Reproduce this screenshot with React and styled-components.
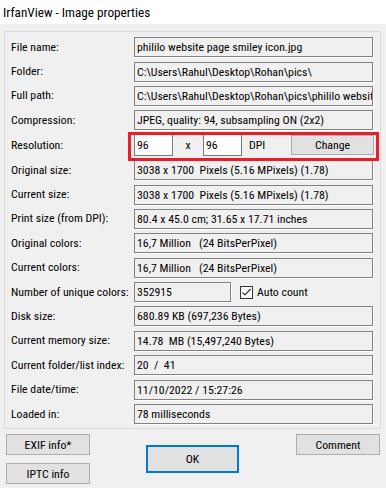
import React from "react";
import styled, { createGlobalStyle } from "styled-components";

const Global = createGlobalStyle`
  html, body { margin: 0; padding: 0; background: #f0f0f0; }
  body {
    font-family: "Roboto Condensed", "Liberation Sans", sans-serif;
    font-size: 11.8px;
    color: #000;
  }
`;

const Window = styled.div`
  width: 386px;
  height: 488px;
  background: #f0f0f0;
  overflow: hidden;
  display: flex;
  flex-direction: column;
`;

const TitleBar = styled.div`
  height: 24px;
  background: #ffffff;
  display: flex;
  align-items: center;
  padding-left: 3px;
  font-size: 13.2px;
  flex: none;
`;

const Group = styled.div`
  margin: 7px 0 0 4px;
  width: 377px;
  box-sizing: border-box;
  border: 1px solid #dcdcdc;
  padding: 3px 6px 2px 6px;
  display: flex;
  flex-direction: column;
`;

const Row = styled.div`
  display: grid;
  grid-template-columns: 123px 1fr;
  align-items: center;
  height: ${(p) => p.$h || 24.4}px;
`;

const Label = styled.div`
  white-space: nowrap;
  padding-bottom: 1px;
`;

const Field = styled.div`
  box-sizing: border-box;
  height: 20px;
  width: ${(p) => (p.$w ? `${p.$w}px` : "239px")};
  border: 1px solid #838383;
  box-shadow: 1px 1px 0 #ffffff;
  background: #f0f0f0;
  padding: 0 2px;
  display: flex;
  align-items: center;
  white-space: pre;
  overflow: hidden;
`;

const Controls = styled.div`
  position: relative;
  display: flex;
  align-items: center;
  height: 100%;
`;

const Edit = styled.div`
  box-sizing: border-box;
  width: 39px;
  height: 22px;
  background: #ffffff;
  border: 1px solid #7a7a7a;
  padding: 0 2px;
  display: flex;
  align-items: center;
`;

const Sep = styled.span`
  width: 30px;
  text-align: center;
`;

const Unit = styled.span`
  margin-left: 7px;
`;

const Button = styled.button`
  box-sizing: border-box;
  font: inherit;
  color: #000;
  background: #e1e1e1;
  border: 1px solid #adadad;
  border-radius: 0;
  padding: 0;
  width: ${(p) => p.$w || 84}px;
  height: ${(p) => p.$hgt || 21}px;
  margin-left: ${(p) => (p.$auto ? "auto" : "0")};
`;

const DefaultButton = styled(Button)`
  border: 2px solid #0078d7;
`;

const Highlight = styled.div`
  position: absolute;
  left: -6px;
  right: -5px;
  top: -1px;
  bottom: -3.4px;
  border: 3px solid #e5202a;
  pointer-events: none;
`;

const CheckWrap = styled.label`
  display: flex;
  align-items: center;
  margin-left: 9px;
  gap: 4px;
`;

const Box = styled.span`
  box-sizing: border-box;
  width: 13px;
  height: 13px;
  border: 1px solid #333333;
  background: #ffffff;
  display: flex;
`;

const Inline = styled.div`
  display: flex;
  align-items: center;
`;

const Footer = styled.div`
  display: flex;
  align-items: flex-start;
  padding: 5px 6px 0 6px;
`;

const LeftCol = styled.div`
  display: flex;
  flex-direction: column;
  gap: 8px;
`;

const Center = styled.div`
  margin: 11px 0 0 56px;
`;

const rows = [
  ["File name:", "phililo website page smiley icon.jpg"],
  ["Folder:", "C:\\Users\\Rahul\\Desktop\\Rohan\\pics\\"],
  ["Full path:", "C:\\Users\\Rahul\\Desktop\\Rohan\\pics\\phililo website page smiley icon.jpg"],
  ["Compression:", "JPEG, quality: 94, subsampling ON (2x2)"],
];

const rows2 = [
  ["Original size:", "3038 x 1700  Pixels (5.16 MPixels) (1.78)"],
  ["Current size:", "3038 x 1700  Pixels (5.16 MPixels) (1.78)"],
  ["Print size (from DPI):", "80.4 x 45.0 cm; 31.65 x 17.71 inches"],
  ["Original colors:", "16,7 Million   (24 BitsPerPixel)"],
  ["Current colors:", "16,7 Million   (24 BitsPerPixel)"],
];

const rows3 = [
  ["Disk size:", "680.89 KB (697,236 Bytes)"],
  ["Current memory size:", "14.78  MB (15,497,240 Bytes)"],
  ["Current folder/list index:", "20  /  41"],
  ["File date/time:", "11/10/2022 / 15:27:26"],
  ["Loaded in:", "78 milliseconds"],
];

const InfoRow = ({ label, value }) => (
  <Row>
    <Label>{label}</Label>
    <Field>{value}</Field>
  </Row>
);

export default function App() {
  return (
    <Window>
      <Global />
      <TitleBar>IrfanView - Image properties</TitleBar>
      <Group>
        {rows.map(([l, v]) => (
          <InfoRow key={l} label={l} value={v} />
        ))}
        <Row $h={25.4}>
          <Label>Resolution:</Label>
          <Controls>
            <Edit>96</Edit>
            <Sep>x</Sep>
            <Edit>96</Edit>
            <Unit>DPI</Unit>
            <Button $w={83} $hgt={20} $auto>
              Change
            </Button>
            <Highlight />
          </Controls>
        </Row>
        {rows2.map(([l, v]) => (
          <InfoRow key={l} label={l} value={v} />
        ))}
        <Row>
          <Label>Number of unique colors:</Label>
          <Inline>
            <Field $w={97}>352915</Field>
            <CheckWrap>
              <Box>
                <svg width="11" height="11" viewBox="0 0 11 11">
                  <polyline
                    points="1.5,5.5 4,8 9.5,2"
                    fill="none"
                    stroke="#333"
                    strokeWidth="1.2"
                  />
                </svg>
              </Box>
              Auto count
            </CheckWrap>
          </Inline>
        </Row>
        {rows3.map(([l, v]) => (
          <InfoRow key={l} label={l} value={v} />
        ))}
      </Group>
      <Footer>
        <LeftCol>
          <Button>EXIF info*</Button>
          <Button>IPTC info</Button>
        </LeftCol>
        <Center>
          <DefaultButton $w={93} $hgt={28}>
            OK
          </DefaultButton>
        </Center>
        <Button $auto>Comment</Button>
      </Footer>
    </Window>
  );
}
